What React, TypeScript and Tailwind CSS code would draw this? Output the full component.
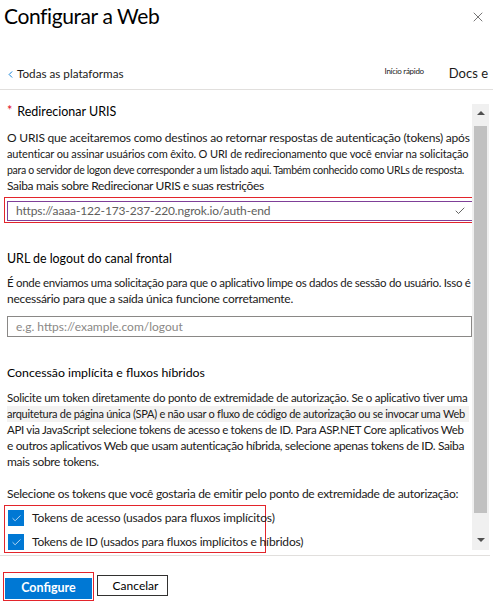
import React from 'react';
import { X, Check, ChevronLeft } from 'lucide-react';

const Line: React.FC<{ text: string; className?: string }> = ({ text, className = '' }) => (
  <div className={`whitespace-nowrap h-[16px] leading-[16px] ${className}`}>{text}</div>
);

const Scrollbar: React.FC = () => (
  <div className="flex h-full w-[17px] flex-col bg-[#f0f0f0]">
    <div className="flex h-[18px] items-center justify-center">
      <div className="h-0 w-0 border-x-[4px] border-b-[4px] border-x-transparent border-b-[#505050]" />
    </div>
    <div className="mx-[2px] mt-[4px] h-[387px] bg-[#c1c1c1]" />
    <div className="flex-1" />
    <div className="flex h-[20px] items-center justify-center">
      <div className="h-0 w-0 border-x-[4px] border-t-[4px] border-x-transparent border-t-[#505050]" />
    </div>
  </div>
);

const Tick: React.FC = () => (
  <div className="flex h-[16px] w-[16px] shrink-0 items-center justify-center bg-[#0078d4]">
    <Check size={11} strokeWidth={1.5} className="text-white" />
  </div>
);

export default function App() {
  return (
    <div className="flex h-[604px] w-[493px] flex-col bg-white font-['Lato',sans-serif] text-[#1b1a19]">
      {/* header */}
      <div className="flex h-[30px] items-start justify-between pl-[4px] pr-[7px] pt-[2px]">
        <h1 className="text-[21px] leading-[28px] tracking-[-0.4px] text-black">Configurar a Web</h1>
        <X size={16} strokeWidth={1} className="mt-[7px] text-[#323130]" />
      </div>
      <div className="mt-[33px] flex h-[27px] items-center border-b border-[#e1dfdd] pb-[4px] pl-[5px] pr-[5px]">
        <ChevronLeft size={11} strokeWidth={2} className="text-[#0078d4]" />
        <span className="ml-[1px] text-[11.7px]">Todas as plataformas</span>
        <span className="ml-auto -mt-[6px] text-[8px] tracking-[-0.3px]">Início rápido</span>
        <span className="ml-[25px] text-[13px]">Docs e</span>
      </div>

      {/* body */}
      <div className="flex h-[465px] overflow-hidden">
        <div className="w-[472px] shrink-0 overflow-hidden pl-[7px] text-[12px]">
          <div className="mt-[14px] flex items-start text-[12.5px] text-black">
            <span className="mr-[5px] leading-[14px] text-[#e00b1c]">*</span>
            <span className="leading-[16px]">Redirecionar URIS</span>
          </div>
          <div className="mt-[10px]">
            <Line text="O URIS que aceitaremos como destinos ao retornar respostas de autenticação (tokens) após" className="tracking-[-0.2px]" />
            <Line text="autenticar ou assinar usuários com êxito. O URI de redirecionamento que você enviar na solicitação" className="text-[11px] tracking-[-0.15px]" />
            <Line text="para o servidor de logon deve corresponder a um listado aqui. Também conhecido como URLs de resposta." className="text-[10.5px] tracking-[-0.3px]" />
            <Line text="Saiba mais sobre Redirecionar URIS e suas restrições" className="tracking-[-0.35px]" />
          </div>
          <div className="-ml-[3px] mt-[3px] w-[472px] border border-[#e3242b] px-[2px] pb-[1px] pt-[3px]">
            <div className="flex h-[20px] items-center justify-between border border-[#7f3f98] pl-[8px] pr-[6px] text-[12px] tracking-[-0.15px] text-[#605e5c]">
              <span>https://aaaa-122-173-237-220.ngrok.io/auth-end</span>
              <Check size={12} strokeWidth={1.5} className="text-[#323130]" />
            </div>
          </div>

          <div className="mt-[28px] text-[12.4px] leading-[16px] text-black">URL de logout do canal frontal</div>
          <div className="mt-[8px]">
            <Line text="É onde enviamos uma solicitação para que o aplicativo limpe os dados de sessão do usuário. Isso é" className="text-[11.5px] tracking-[-0.3px]" />
            <Line text="necessário para que a saída única funcione corretamente." className="tracking-[-0.25px]" />
          </div>
          <div className="mt-[9px] flex h-[21px] w-[465px] items-center border border-[#8a8886] pl-[8px] text-[12px] text-[#8a8886]">
            e.g. https://example.com/logout
          </div>

          <div className="mt-[28px] text-[12.3px] leading-[16px] text-black">Concessão implícita e fluxos híbridos</div>
          <div className="mt-[9px]">
            <Line text="Solicite um token diretamente do ponto de extremidade de autorização. Se o aplicativo tiver uma" className="text-[11.5px] tracking-[-0.27px]" />
            <Line text="arquitetura de página única (SPA) e não usar o fluxo de código de autorização ou se invocar uma Web" className="w-[462px] bg-[#f3f2f1] text-[11px] tracking-[-0.28px]" />
            <Line text="API via JavaScript selecione tokens de acesso e tokens de ID. Para ASP.NET Core aplicativos Web" className="text-[11.5px] tracking-[-0.32px]" />
            <Line text="e outros aplicativos Web que usam autenticação híbrida, selecione apenas tokens de ID. Saiba" className="tracking-[-0.37px]" />
            <Line text="mais sobre tokens." className="tracking-[-0.3px]" />
          </div>

          <div className="mt-[16px]">
            <Line text="Selecione os tokens que você gostaria de emitir pelo ponto de extremidade de autorização:" className="tracking-[-0.28px]" />
          </div>
          <div className="-ml-[3px] mt-[3px] h-[48px] w-[262px] border border-[#e3242b] pl-[3px] pt-[2px] text-[12px]">
            <div className="flex h-[20px] items-center gap-[8px] whitespace-nowrap tracking-[-0.15px]">
              <Tick />
              <span>Tokens de acesso (usados para fluxos implícitos)</span>
            </div>
            <div className="mt-[4px] flex h-[20px] items-center gap-[8px] whitespace-nowrap tracking-[-0.2px]">
              <Tick />
              <span>Tokens de ID (usados para fluxos implícitos e híbridos)</span>
            </div>
          </div>
        </div>
        <div className="mt-[14px] h-[446px]">
          <Scrollbar />
        </div>
      </div>

      {/* footer */}
      <div className="mr-[3px] border-t border-[#e1dfdd]" />
      <div className="mt-[16px] flex items-start gap-[3px] pl-[3px]">
        <div className="border border-[#e3242b] p-[1px]">
          <button className="h-[21px] w-[87px] bg-[#0078d4] text-[12.5px] font-bold text-white">Configure</button>
        </div>
        <button className="mt-[3px] h-[21px] w-[71px] border border-[#323130] bg-white pl-[6px] text-[12px] text-black">Cancelar</button>
      </div>
    </div>
  );
}
